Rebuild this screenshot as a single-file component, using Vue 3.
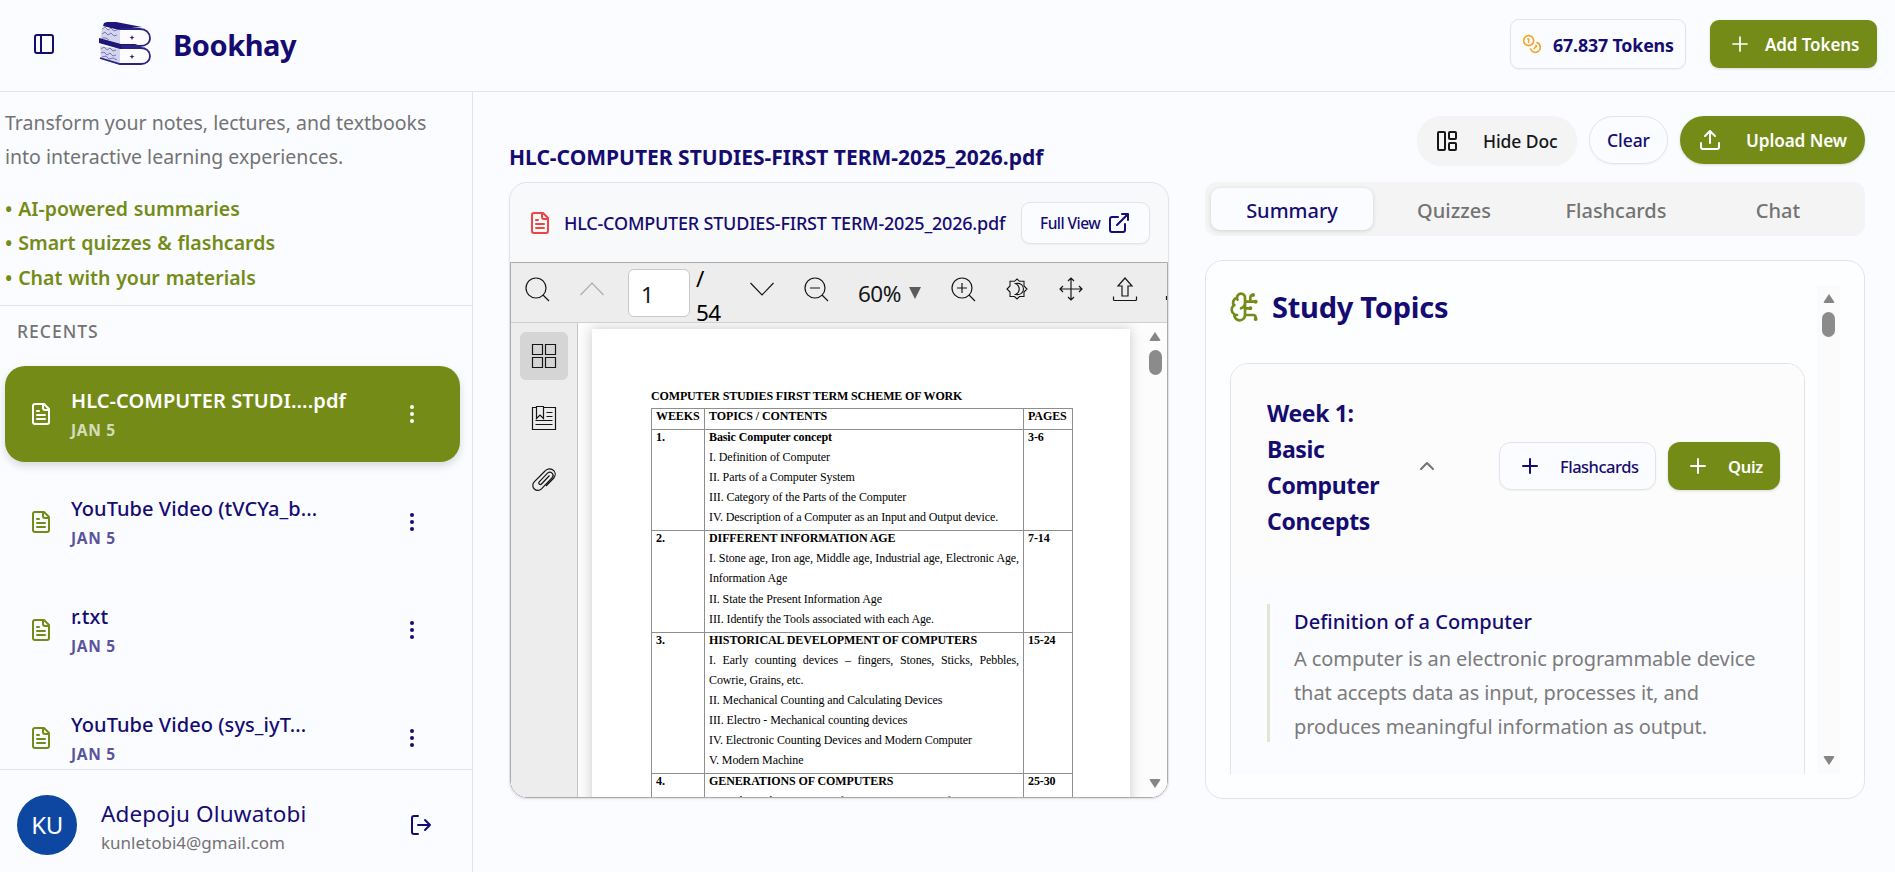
<template>
  <div class="app">
    <header class="topbar">
      <svg class="ic toggle" viewBox="0 0 24 24"><rect x="3" y="3" width="18" height="18" rx="2" /><path d="M9 3v18" /></svg>
      <svg class="logo" viewBox="0 0 54 44">
        <path class="logo-page" d="M4 6 22 8v16L2 19zM2 24l20 3v16L3 37z" />
        <path class="logo-wave" d="M4 7l3-2 3 3 3-2 3 3 3-1M4 12l3-2 3 3 3-2 3 3 3-1M4 16l4 0 3 2M3 27l3-2 3 3 3-2 3 3 3-1M3 31l3-1 3 3 3-2 3 3 3-1M4 35l4-1 3 3 4-1 4 2" />
        <path class="logo-body" d="M22 8h21c5 0 8 4 8 8s-3 7-8 8H22zM22 26h21c5 0 8 4 8 8s-4 8-9 8H22z" />
        <path class="logo-cover" d="M6 1 9 0h9l26 5c-6 1-17 1-23 3L5 4zM1 16l22 6h14l6 2-4 3H22L1 21z" />
        <path class="logo-line" d="M22 7h20c6 0 10 4 10 9s-4 8-10 8H23M24 26h19c5 0 9 3 9 8s-4 8-9 8H22L2 36" />
        <path class="logo-star" d="M34 13l.7 1.9 1.9.7-1.9.7L34 18.200l-.7-1.900-1.900-.7 1.900-.7zM34 32l.7 1.900 1.900.7-1.900.7L34 37.200l-.7-1.900-1.900-.7 1.900-.7z" />
      </svg>
      <span class="brand">Bookhay</span>
      <div class="topbar-right">
        <div class="tokens">
          <svg class="ic coins" viewBox="0 0 24 24"><circle cx="8" cy="8" r="6" /><path d="M18.090 10.370A6 6 0 1 1 10.340 18M7 6h1v4M16.710 13.880l.7.71-2.820 2.820" /></svg>
          <span>67.837 Tokens</span>
        </div>
        <button class="btn green add">
          <svg class="ic thin" viewBox="0 0 24 24"><path :d="icons.plus" /></svg>
          <span>Add Tokens</span>
        </button>
      </div>
    </header>

    <div class="body">
      <aside class="sidebar">
        <div class="intro">
          <p>Transform your notes, lectures, and textbooks<br>into interactive learning experiences.</p>
          <ul>
            <li v-for="f in features" :key="f">• {{ f }}</li>
          </ul>
        </div>
        <div class="recents">
          <h4>RECENTS</h4>
          <div v-for="(r, i) in recents" :key="r" class="recent" :class="{ active: i === 0 }">
            <svg class="ic" viewBox="0 0 24 24"><path :d="icons.file" /></svg>
            <div class="recent-text">
              <div class="recent-name">{{ r }}</div>
              <div class="recent-date">JAN 5</div>
            </div>
            <svg class="dots" viewBox="0 0 24 24"><circle cx="12" cy="5" r="2" /><circle cx="12" cy="12" r="2" /><circle cx="12" cy="19" r="2" /></svg>
          </div>
        </div>
        <div class="user">
          <div class="avatar">KU</div>
          <div class="user-text">
            <div class="user-name">Adepoju Oluwatobi</div>
            <div class="user-mail">kunletobi4@gmail.com</div>
          </div>
          <svg class="ic" viewBox="0 0 24 24"><path d="m16 17 5-5-5-5M21 12H9M9 21H5a2 2 0 0 1-2-2V5a2 2 0 0 1 2-2h4" /></svg>
        </div>
      </aside>

      <main class="main">
        <div class="main-head">
          <h2>{{ docName }}</h2>
          <div class="actions">
            <button class="pill grey">
              <svg class="ic" viewBox="0 0 24 24"><rect x="3" y="3" width="7" height="18" rx="1" /><rect x="14" y="3" width="7" height="7" rx="1" /><rect x="14" y="14" width="7" height="7" rx="1" /></svg>
              <span>Hide Doc</span>
            </button>
            <button class="pill outline"><span>Clear</span></button>
            <button class="pill green">
              <svg class="ic" viewBox="0 0 24 24"><path d="M12 3v12M17 8l-5-5-5 5M21 15v4a2 2 0 0 1-2 2H5a2 2 0 0 1-2-2v-4" /></svg>
              <span>Upload New</span>
            </button>
          </div>
        </div>

        <div class="columns">
          <section class="doc">
            <div class="doc-head">
              <svg class="ic red" viewBox="0 0 24 24"><path :d="icons.file" /></svg>
              <span class="doc-name">{{ docName }}</span>
              <button class="full">
                <span>Full View</span>
                <svg class="ic" viewBox="0 0 24 24"><path d="M15 3h6v6M10 14 21 3M18 13v6a2 2 0 0 1-2 2H5a2 2 0 0 1-2-2V8a2 2 0 0 1 2-2h6" /></svg>
              </button>
            </div>

            <div class="viewer">
              <div class="toolbar">
                <svg class="tb search" viewBox="0 0 24 24"><circle cx="11" cy="11" r="10" /><path d="m18 18 6 6" /></svg>
                <svg class="tb up" viewBox="0 0 24 24"><path d="M.5 18 12 6l11.500 12" /></svg>
                <div class="page-no">1</div>
                <div class="page-total">/<br>54</div>
                <svg class="tb down" viewBox="0 0 24 24"><path d="M.5 6 12 18 23.500 6" /></svg>
                <svg class="tb zout" viewBox="0 0 24 24"><circle cx="11" cy="11" r="10" /><path d="m18 18 6 6M6 11h10" /></svg>
                <div class="scale">60%</div>
                <svg class="caret" viewBox="0 0 12 12"><path d="M0 0h12L6 12z" /></svg>
                <svg class="tb zin" viewBox="0 0 24 24"><circle cx="11" cy="11" r="10" /><path d="m18 18 6 6M6 11h10M11 6v10" /></svg>
                <svg class="tb contrast" viewBox="0 0 24 24">
                  <path d="M12 2 14.500 4.300H19V9L22 12l-3 3v4.500h-4.500L12 22l-2.500-2.500H5V15l-3-3 3-3V4.300h4.500z" />
                  <path d="M10.500 6.500c5.500-.8 8 2 8 5.500s-3 6.300-8 5.500c5-2.500 5-8.500 0-11z" />
                </svg>
                <svg class="tb move" viewBox="0 0 24 24"><path d="M12 1v22M1 12h22M9 4 12 1l3 3M9 20l3 3 3-3M4 9 1 12l3 3M20 9l3 3-3 3" /></svg>
                <svg class="tb share" viewBox="0 0 24 24"><path d="M9 19V9H5l7-8 7 8h-4v10zM.5 19.500v3q0 1 1 1h21q1 0 1-1v-3" /></svg>
                <svg class="tb more" viewBox="0 0 24 24"><path d="M.5 19v4" /></svg>
              </div>
              <div class="viewer-body">
                <div class="rail">
                  <div class="rail-item on"><svg class="tb" viewBox="0 0 24 24"><path d="M.5.500h10v10H.500zM13.500.5h10v10h-10zM.5 13.500h10v10H.500zM13.500 13.500h10v10h-10z" /></svg></div>
                  <div class="rail-item"><svg class="tb" viewBox="0 0 24 24"><path d="M4.500.5v12L8 9l3.500 3.500V.500zM4.500 1.500h-4v22h23v-22h-12M14.500 6.500h6M14.500 10.500h6M3.500 14.500h17M3.500 18.500h17" /></svg></div>
                  <div class="rail-item"><svg class="tb" viewBox="0 0 24 24"><path d="M17.500 7.500 9.500 16a1.500 1.500 0 0 1-2.300-2.200l8.300-8.600a3.200 3.200 0 0 1 4.600 4.500L9.500 20.800a5 5 0 0 1-7.300-7L13 3a5.800 5.800 0 0 1 8.800-.3 5.500 5.500 0 0 1 0 7.300L14 18" /></svg></div>
                </div>
                <div class="sheet-area">
                  <div class="sheet">
                    <div class="sheet-title">COMPUTER STUDIES FIRST TERM SCHEME OF WORK</div>
                    <table>
                      <tbody>
                        <tr class="th"><td>WEEKS</td><td>TOPICS / CONTENTS</td><td>PAGES</td></tr>
                        <tr v-for="w in weeks" :key="w.no">
                          <td>{{ w.no }}.</td>
                          <td>
                            <div class="lines">
                              <b>{{ w.title }}</b>
                              <p v-for="l in w.lines" :key="l">{{ l }}</p>
                            </div>
                          </td>
                          <td>{{ w.pages }}</td>
                        </tr>
                      </tbody>
                    </table>
                  </div>
                </div>
                <div class="sbar">
                  <i class="arrow-up"></i><i class="thumb"></i><i class="arrow-down"></i>
                </div>
              </div>
            </div>
          </section>

          <section class="study">
            <div class="tabs">
              <div v-for="(t, i) in tabs" :key="t" class="tab" :class="{ on: i === 0 }">{{ t }}</div>
            </div>
            <div class="panel">
              <div class="panel-body">
                <div class="panel-title">
                  <svg class="ic brain" viewBox="0 0 24 24">
                    <path d="M12 5a3 3 0 1 0-5.997.125 4 4 0 0 0-2.526 5.770 4 4 0 0 0 .556 6.588A4 4 0 1 0 12 18ZM9 13a4.500 4.500 0 0 0 3-4M6.003 5.125A3 3 0 0 0 6.401 6.500M3.477 10.896a4 4 0 0 1 .585-.396M6 18a4 4 0 0 1-1.967-.516M12 13h4M12 18h6a2 2 0 0 1 2 2v1M12 8h8M16 8V5a2 2 0 0 1 2-2" />
                    <circle cx="16" cy="13" r=".5" /><circle cx="18" cy="3" r=".5" /><circle cx="20" cy="21" r=".5" /><circle cx="20" cy="8" r=".5" />
                  </svg>
                  <span>Study Topics</span>
                </div>
                <div class="topic">
                  <div class="topic-head">
                    <h3>Week 1: Basic Computer Concepts</h3>
                    <svg class="ic chev" viewBox="0 0 24 24"><path d="m18 15-6-6-6 6" /></svg>
                    <button class="btn line">
                      <svg class="ic" viewBox="0 0 24 24"><path :d="icons.plus" /></svg>
                      <span>Flashcards</span>
                    </button>
                    <button class="btn green quiz">
                      <svg class="ic" viewBox="0 0 24 24"><path :d="icons.plus" /></svg>
                      <span>Quiz</span>
                    </button>
                  </div>
                  <div class="topic-body">
                    <div class="point">
                      <h5>Definition of a Computer</h5>
                      <p>A computer is an electronic programmable device<br>that accepts data as input, processes it, and<br>produces meaningful information as output.</p>
                    </div>
                  </div>
                </div>
              </div>
              <div class="sbar">
                <i class="arrow-up"></i><i class="thumb"></i><i class="arrow-down"></i>
              </div>
            </div>
          </section>
        </div>
      </main>
    </div>
  </div>
</template>

<script setup>
const docName = 'HLC-COMPUTER STUDIES-FIRST TERM-2025_2026.pdf'

const icons = {
  plus: 'M5 12h14M12 5v14',
  file: 'M15 2H6a2 2 0 0 0-2 2v16a2 2 0 0 0 2 2h12a2 2 0 0 0 2-2V7ZM14 2v4a2 2 0 0 0 2 2h4M10 9H8M16 13H8M16 17H8',
}

const features = ['AI-powered summaries', 'Smart quizzes & flashcards', 'Chat with your materials']
const recents = ['HLC-COMPUTER STUDI....pdf', 'YouTube Video (tVCYa_b...', 'r.txt', 'YouTube Video (sys_iyT...']
const tabs = ['Summary', 'Quizzes', 'Flashcards', 'Chat']

const weeks = [
  {
    no: 1, title: 'Basic Computer concept', pages: '3-6',
    lines: [
      'I. Definition of Computer',
      'II. Parts of a Computer System',
      'III. Category of the Parts of the Computer',
      'IV. Description of a Computer as an Input and Output device.',
    ],
  },
  {
    no: 2, title: 'DIFFERENT INFORMATION AGE', pages: '7-14',
    lines: [
      'I. Stone age, Iron age, Middle age, Industrial age, Electronic Age, Information Age',
      'II. State the Present Information Age',
      'III. Identify the Tools associated with each Age.',
    ],
  },
  {
    no: 3, title: 'HISTORICAL DEVELOPMENT OF COMPUTERS', pages: '15-24',
    lines: [
      'I. Early counting devices – fingers, Stones, Sticks, Pebbles, Cowrie,\u00a0Grains,\u00a0etc.',
      'II. Mechanical Counting and Calculating Devices',
      'III. Electro - Mechanical counting devices',
      'IV. Electronic Counting Devices and Modern Computer',
      'V. Modern Machine',
    ],
  },
  { no: 4, title: 'GENERATIONS OF COMPUTERS', pages: '25-30', lines: ['Describe each Generation of Computer in Terms of:'] },
]
</script>

<style>
body { margin: 0; overflow: hidden; background: #fbfcff; }
</style>

<style scoped>
.app {
  height: 872px; display: flex; flex-direction: column;
  font-family: "Noto Sans", "Open Sans", sans-serif;
  color: #150c72; background: #fbfcff;
  --green: #748c17; --line: #e2e4e8;
}
.app * { box-sizing: border-box; }
h2, h3, h4, h5, p, ul { margin: 0; padding: 0; }
span, h2, h4, .tab, .recent-name { white-space: nowrap; }
button { font: inherit; color: inherit; border: 0; background: none; }
svg { flex: none; display: block; overflow: visible; }
.ic { width: 24px; height: 24px; fill: none; stroke: currentColor; stroke-width: 2; stroke-linecap: round; stroke-linejoin: round; }
.ic.thin { stroke-width: 1.7; }

/* top bar */
.topbar {
  height: 92px; flex: none; display: flex; align-items: center;
  padding: 0 18px 4px 32px; border-bottom: 1px solid var(--line);
}
.logo { width: 54px; height: 44px; margin-left: 42px; }
.logo-page { fill: #d3d4ee; }
.logo-wave { fill: none; stroke: #6660a5; stroke-width: .8; }
.logo-body { fill: #fcfcff; }
.logo-cover { fill: #201579; }
.logo-line { fill: none; stroke: #2b2384; stroke-width: 1.8; }
.logo-star { fill: #201579; }
.brand { margin-left: 21px; padding-top: 2px; font-size: 29px; font-weight: 700; letter-spacing: -.45px; }
.topbar-right { margin-left: auto; display: flex; align-items: center; gap: 24px; }
.tokens {
  width: 176px; height: 50px; padding-left: 11px;
  display: flex; align-items: center; gap: 11px;
  border: 1px solid var(--line); border-radius: 9px;
  font-size: 17.800px; font-weight: 700; letter-spacing: -.15px;
  box-shadow: 0 1px 2px rgba(0, 0, 0, .05);
}
.tokens span { padding-top: 2px; }
.coins { width: 20px; height: 20px; color: #f5a52a; }
.btn { height: 48px; display: flex; align-items: center; border-radius: 9px; box-shadow: 0 1px 3px rgba(0, 0, 0, .15); }
.green { background: var(--green); color: #fff; }
.add { width: 167px; padding: 0 0 0 18px; gap: 13px; font-size: 17px; font-weight: 600; letter-spacing: -.1px; }
.add span { padding-top: 1px; }

.body { flex: 1; min-height: 0; display: flex; }

/* sidebar */
.sidebar { width: 473px; flex: none; display: flex; flex-direction: column; border-right: 1px solid var(--line); }
.intro { height: 214px; padding: 14px 0 0 5px; border-bottom: 1px solid var(--line); font-size: 19.500px; line-height: 34px; }
.intro p { color: #737373; letter-spacing: 0; white-space: nowrap; }
.intro ul { list-style: none; margin-top: 18px; color: var(--green); font-weight: 600; letter-spacing: .02px; word-spacing: .7px; }
.intro li { height: 34.300px; }
.recents { flex: 1; min-height: 0; overflow: hidden; padding: 0 12px 0 5px; }
.recents h4 { margin: 11px 0 23px 12px; height: 26px; line-height: 28px; font-size: 17.500px; font-weight: 500; letter-spacing: 1px; color: #737373; }
.recent { height: 96px; margin-bottom: 12px; padding: 0 36px 0 24px; display: flex; align-items: center; border-radius: 20px; }
.recent .ic { color: var(--green); }
.recent-text { flex: 1; margin-left: 18px; padding-top: 1px; }
.recent-name { font-size: 20px; line-height: 30px; font-weight: 500; letter-spacing: .07px; }
.recent-date { font-size: 15.500px; line-height: 28px; font-weight: 700; letter-spacing: .7px; opacity: .7; }
.dots { width: 24px; height: 24px; fill: currentColor; }
.recent.active { background: var(--green); color: #fff; box-shadow: 0 4px 8px rgba(0, 0, 0, .14); }
.recent.active .ic { color: #fff; }
.recent.active .recent-name { font-weight: 600; }
.user { height: 103px; flex: none; display: flex; align-items: center; padding: 7px 39px 0 17px; border-top: 1px solid var(--line); }
.avatar { width: 60px; height: 60px; border-radius: 50%; background: #0d47a1; color: #fff; font-size: 24px; line-height: 60px; text-align: center; letter-spacing: -.5px; }
.user-text { flex: 1; margin-left: 24px; padding-top: 5px; }
.user-name { font-size: 22.500px; line-height: 30px; letter-spacing: .15px; }
.user-mail { font-size: 17px; line-height: 27px; color: #737373; }

/* main */
.main { flex: 1; min-width: 0; padding: 24px 30px 0 36px; }
.main-head { height: 66px; display: flex; justify-content: space-between; }
.main-head h2 { margin-top: 27px; font-size: 21px; line-height: 28px; font-weight: 700; letter-spacing: 0; }
.actions { display: flex; gap: 12px; }
.pill { height: 49px; display: flex; align-items: center; padding: 0 18px; border-radius: 25px; gap: 24px; font-size: 17.500px; font-weight: 500; letter-spacing: -.1px; }
.pill.grey { width: 160px; background: #f4f4f4; color: #171717; box-shadow: 0 1px 2px rgba(0, 0, 0, .04); }
.pill.outline { width: 79px; height: 48px; justify-content: center; border: 1px solid var(--line); box-shadow: 0 1px 2px rgba(0, 0, 0, .05); }
.pill.green { width: 185px; height: 48px; font-size: 17.200px; font-weight: 600; box-shadow: 0 1px 3px rgba(0, 0, 0, .15); }
.columns { display: flex; gap: 36px; }

/* document card */
.doc {
  width: 660px; height: 617px; flex: none; display: flex; flex-direction: column;
  overflow: hidden; border: 1px solid var(--line); border-radius: 18px; background: #f8f9fb;
  box-shadow: 0 1px 3px rgba(0, 0, 0, .05);
}
.doc-head { height: 79px; flex: none; display: flex; align-items: center; padding: 0 18px; }
.doc-head > .ic { color: #ef4444; }
.doc-name { margin-left: 12px; font-size: 18px; font-weight: 500; letter-spacing: -.2px; }
.full {
  width: 129px; height: 42px; margin-left: auto; padding: 0 18px;
  display: flex; align-items: center; justify-content: space-between;
  border: 1px solid var(--line); border-radius: 9px; background: #fbfcff;
  font-size: 15.500px; font-weight: 500; letter-spacing: -.55px; box-shadow: 0 1px 2px rgba(0, 0, 0, .05);
}
.viewer { flex: 1; min-height: 0; display: flex; flex-direction: column; border: 1px solid #ababab; border-radius: 0 0 17px 17px; overflow: hidden; color: #161616; }
.toolbar { height: 60px; flex: none; display: flex; align-items: flex-start; background: #ededed; border-bottom: 1px solid #cfcfcf; }
.tb { width: 24px; height: 24px; fill: none; stroke: currentColor; stroke-width: 1.2; }
.toolbar .tb { margin-top: 14px; }
.search { margin-left: 14px; }
.up { margin-left: 31px; color: #ababab; }
.page-no { width: 62px; height: 48px; margin: 6px 0 0 24px; padding-left: 12px; flex: none; line-height: 50px; font-size: 22.500px; background: #fff; border: 1px solid #c9c9c9; border-radius: 6px; }
.page-total { width: 26px; margin: -1px 0 0 6px; flex: none; font-size: 22.500px; line-height: 34px; letter-spacing: -.5px; color: #000; }
.down { margin-left: 28px; }
.zout { margin-left: 30px; }
.scale { width: 46px; margin: 14px 0 0 30px; flex: none; font-size: 22.500px; line-height: 34px; letter-spacing: -.5px; }
.caret { width: 12px; height: 12px; margin: 24px 0 0 5px; fill: #5c5c5c; }
.zin, .contrast, .move, .share { margin-left: 30px; }
.toolbar .contrast { stroke-width: 1.1; }
.more { margin-left: 29px; }
.viewer-body { flex: 1; min-height: 0; display: flex; background: #fcfcfc; }
.rail { width: 67px; flex: none; padding: 9px 0 0 9px; background: #ededed; border-right: 1px solid #c4c4c4; }
.rail-item { width: 48px; height: 48px; margin-bottom: 14px; display: grid; place-items: center; border-radius: 6px; }
.rail-item.on { background: #d5d5d5; }
.sheet-area { flex: 1; padding: 6px 0 0 14px; overflow: hidden; }
.sheet { width: 538px; height: 700px; padding: 57px 0 0 59px; background: #fff; box-shadow: 0 0 12px rgba(0, 0, 0, .2); font: 12px/20px "Liberation Serif", serif; color: #000; }
.sheet-title { margin-bottom: 2px; height: 20px; font-weight: 700; white-space: nowrap; letter-spacing: -.15px; }
table { width: 422px; table-layout: fixed; border-collapse: collapse; }
td { padding: 0 4px; vertical-align: top; border: 1px solid #8e8e8e; line-height: 14px; font-weight: 700; letter-spacing: -.1px; }
td:first-child { width: 53px; }
td:last-child { width: 49px; }
.th td { height: 21px; }
.lines { margin-top: -3px; padding-bottom: 3px; line-height: 20.070px; letter-spacing: -.1px; text-align: justify; }
.lines b { display: block; letter-spacing: -.1px; }
.lines p { font-weight: 400; }

/* drawn scrollbars */
.sbar { display: flex; flex-direction: column; align-items: center; }
.arrow-up, .arrow-down { border: 6px solid transparent; border-top: 0; border-bottom: 9px solid #858585; border-radius: 2px; }
.arrow-down { border-bottom: 0; border-top: 9px solid #858585; margin-top: auto; }
.thumb { width: 13px; height: 25px; margin-top: 9px; border-radius: 7px; background: #8b8b8b; }
.viewer .sbar { width: 24px; padding: 9px 0 9px; background: #fcfcfc; }

/* study column */
.study { width: 660px; flex: none; }
.tabs { height: 54px; padding: 6px; display: flex; border-radius: 12px; background: #f4f4f4; }
.tab { flex: 1; height: 42px; line-height: 45px; text-align: center; font-size: 20px; font-weight: 500; letter-spacing: -.02px; color: #737373; border-radius: 9px; }
.tab.on { background: #fbfcff; color: #150c72; box-shadow: 0 1px 4px rgba(0, 0, 0, .15); }
.panel { height: 539px; margin-top: 24px; padding: 24px; display: flex; border: 1px solid var(--line); border-radius: 18px; background: #fdfeff; }
.panel-body { width: 575px; height: 489px; flex: none; overflow: hidden; }
.panel-title { height: 78px; display: flex; align-items: flex-start; padding-top: 4px; }
.brain { width: 32px; height: 32px; margin: 2px 0 0 -1px; color: var(--green); }
.panel-title span { margin-left: 11px; font-size: 29px; line-height: 36px; font-weight: 700; letter-spacing: -.25px; }
.topic { height: 480px; border: 1px solid var(--line); border-radius: 18px; overflow: hidden; background: #fbfcff; }
.topic-head { height: 216px; padding: 28px 24px 40px 36px; display: flex; align-items: center; background: #fcfcfc; }
.topic-head h3 { width: 124px; padding-top: 1px; font-size: 23px; line-height: 36px; font-weight: 700; letter-spacing: -.35px; }
.chev { margin-left: 24px; color: #737373; }
.btn.line { width: 157px; margin-left: 60px; padding: 0 0 0 18px; gap: 18px; border: 1px solid var(--line); border-radius: 12px; background: #fbfcff; font-size: 16.500px; font-weight: 500; letter-spacing: -.5px; box-shadow: 0 1px 2px rgba(0, 0, 0, .05); }
.quiz { width: 112px; margin-left: 12px; padding: 0 0 0 18px; gap: 18px; border-radius: 12px; font-size: 16.500px; font-weight: 600; letter-spacing: -.3px; }
.topic-body { padding: 24px 36px; }
.point { height: 138px; padding-left: 24px; border-left: 3px solid #e1e6d0; }
.point h5 { margin-bottom: 3px; font-size: 20px; line-height: 35px; font-weight: 500; letter-spacing: .03px; }
.point p { font-size: 20px; line-height: 34px; color: #7b7b7b; letter-spacing: -.1px; white-space: nowrap; }
.panel .sbar { width: 23px; height: 489px; margin-left: 12px; padding: 9px 0; background: #fbfbfb; }
</style>
